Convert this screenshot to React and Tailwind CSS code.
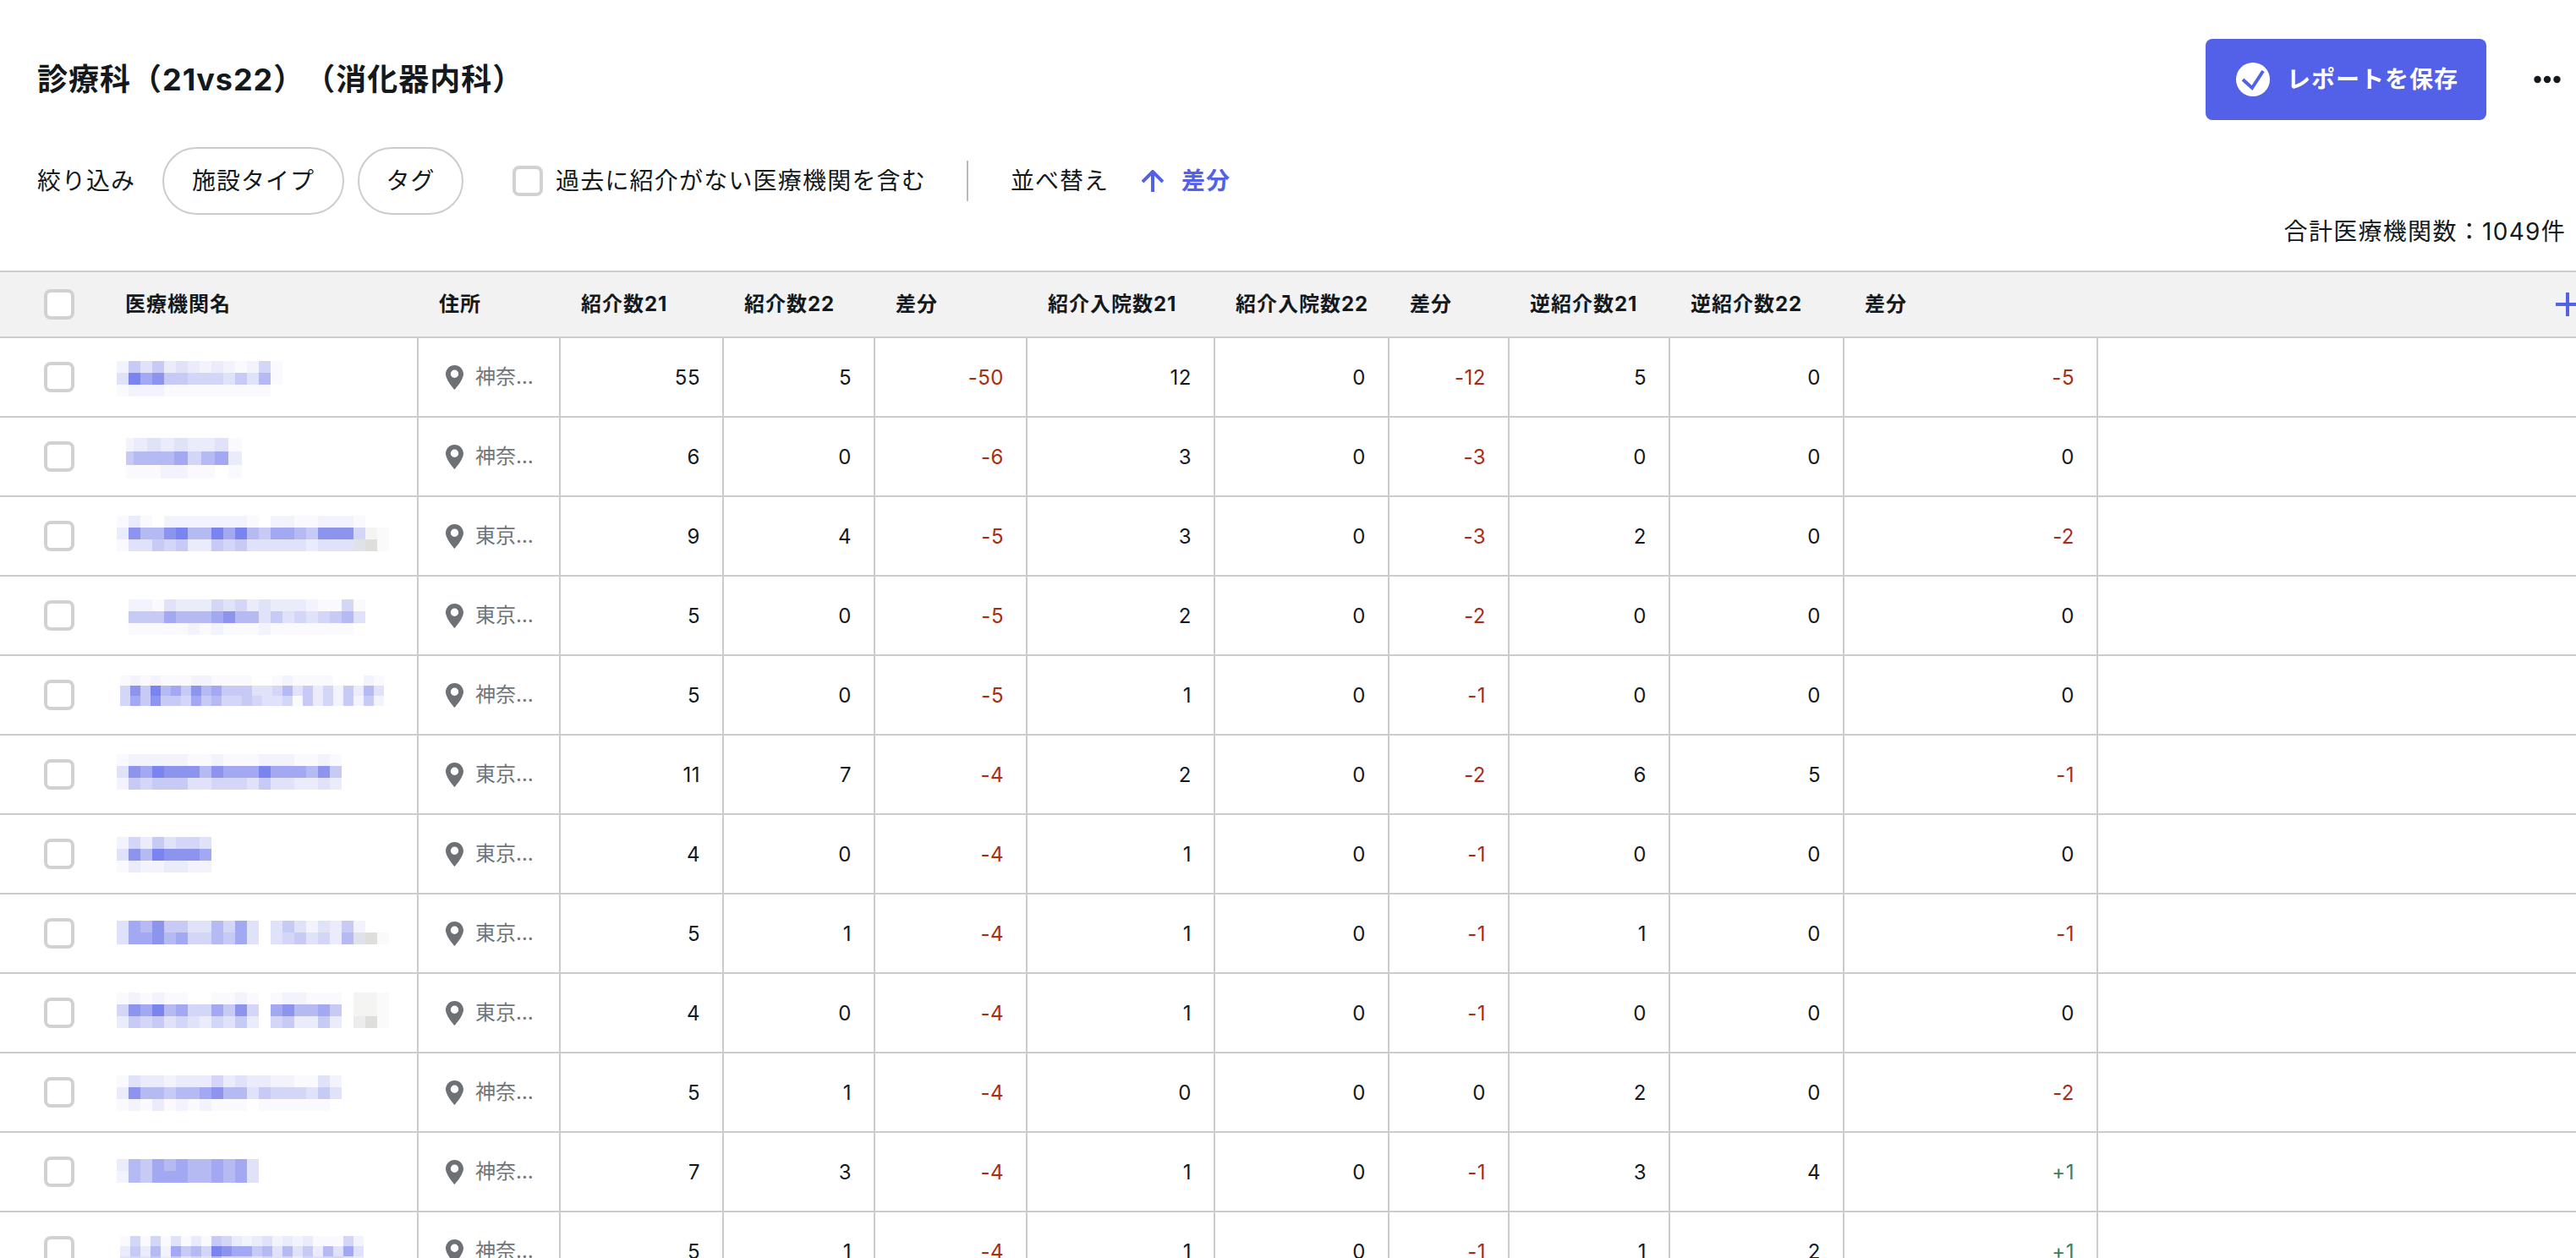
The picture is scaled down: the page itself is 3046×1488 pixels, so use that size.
import React from "react";

const PALETTE = {
  1: "#f9f9fe",
  2: "#f3f3fd",
  3: "#ebecfb",
  4: "#e0e2f9",
  5: "#d4d6f7",
  6: "#c6caf5",
  7: "#b5baf3",
  8: "#a2a8f1",
  9: "#8c94ee",
  a: "#7a84ee",
  g: "#f4f5f2",
  h: "#dedfdd",
  i: "#ececec",
  j: "#fafafa",
  k: "#e0e2ea",
};

// blurred clinic names: x/y are relative to the name cell
const names = [
  { x: 8, y: 27, w: 14, h: 14, rows: ["26463432321251", "4a896655546471", "12221111111110"] },
  { x: 19, y: 24, w: 16, h: 16, first: 9, rows: ["234343341", "677785783", "111221101"] },
  { x: 8, y: 22, w: 14, h: 14, rows: ["13102222222102211222100", "39779a77a8a7688769995gj", "14465633656444443444khj"] },
  { x: 22, y: 27, w: 14, h: 14, rows: ["22143335453433321151", "66687778977464545674", "11111212111211111110"] },
  { x: 12, y: 23, w: 12, h: 12, rows: ["12121112211110012111100021", "596a7869786664457463526374", "58696658675565445163526262"] },
  { x: 8, y: 22, w: 14, h: 14, rows: ["1222221121112221121", "498a99979888a888796", "2656664455546443343"] },
  { x: 8, y: 26, w: 14, h: 14, rows: ["25364554", "497a9998", "13223322"] },
  { x: 8, y: 31, w: 14, h: 14, rows: ["487966447584_4642436200", "488978557684_4564537khj"] },
  { x: 8, y: 22, w: 14, h: 14, rows: ["121211001121_122111_ggj", "598a78558695_897786_ggj", "365645435463_563363_ihj"] },
  { x: 8, y: 26, w: 14, h: 14, rows: ["1433233353433221142", "3977677897746555464", "1213121211101111110"] },
  { x: 8, y: 31, w: 14, h: 14, rows: ["376878778784", "276888778784"] },
  { x: 12, y: 28, w: 12, h: 12, rows: ["151514131653234232311152", "363728675a98867474637484", "454636454755545453545543"] },
];

const rows = [
  ["神奈川県", 55, 5, -50, 12, 0, -12, 5, 0, -5],
  ["神奈川県", 6, 0, -6, 3, 0, -3, 0, 0, 0],
  ["東京都新宿区", 9, 4, -5, 3, 0, -3, 2, 0, -2],
  ["東京都新宿区", 5, 0, -5, 2, 0, -2, 0, 0, 0],
  ["神奈川県", 5, 0, -5, 1, 0, -1, 0, 0, 0],
  ["東京都新宿区", 11, 7, -4, 2, 0, -2, 6, 5, -1],
  ["東京都新宿区", 4, 0, -4, 1, 0, -1, 0, 0, 0],
  ["東京都新宿区", 5, 1, -4, 1, 0, -1, 1, 0, -1],
  ["東京都新宿区", 4, 0, -4, 1, 0, -1, 0, 0, 0],
  ["神奈川県", 5, 1, -4, 0, 0, 0, 2, 0, -2],
  ["神奈川県", 7, 3, -4, 1, 0, -1, 3, 4, 1],
  ["神奈川県", 5, 1, -4, 1, 0, -1, 1, 2, 1],
];

const Checkbox = () => (
  <span className="block h-[36px] w-[36px] shrink-0 rounded-[8px] border-4 border-[#d0d1d1] bg-white" />
);

const Blur = ({ data }) => {
  const { x, y, w, h, first, rows: lines } = data;
  return (
    <svg width="363" height="92" viewBox="0 0 363 92" shapeRendering="crispEdges" className="block">
      {lines.map((line, r) =>
        line.split("").map((c, i) => {
          if (!PALETTE[c]) return null;
          const cx = first ? (i === 0 ? x : x + first + (i - 1) * w) : x + i * w;
          const cw = first && i === 0 ? first : w;
          return <rect key={`${r}-${i}`} x={cx} y={y + r * h} width={cw} height={h} fill={PALETTE[c]} />;
        }),
      )}
    </svg>
  );
};

const Pin = () => (
  <svg width="21" height="29" viewBox="0 0 21 29" className="shrink-0">
    <path
      fillRule="evenodd"
      fill="#6d7175"
      d="M10.5 0C4.7 0 0 4.7 0 10.5 0 17.5 10.5 29 10.5 29S21 17.5 21 10.5C21 4.7 16.3 0 10.5 0Zm0 15a4.7 4.7 0 1 1 0-9.4 4.7 4.7 0 0 1 0 9.4Z"
    />
  </svg>
);

const Num = ({ value }) => (
  <div className="flex items-center justify-end border-r-2 border-[#cccccc] pr-[26px] pt-[2px] tracking-[0.5px] text-[#14191d]">{value}</div>
);

const Diff = ({ value }) => {
  let color = "text-[#14191d]";
  if (value < 0) color = "text-[#a92d12]";
  if (value > 0) color = "text-[#38805a]";
  return (
    <div className={`flex items-center justify-end border-r-2 border-[#cccccc] pr-[26px] pt-[2px] tracking-[0.5px] ${color}`}>
      {value > 0 ? `+${value}` : value}
    </div>
  );
};

const gridCols =
  "grid grid-cols-[495px_168px_193px_179px_180px_222px_206px_142px_190px_206px_300px_1fr]";

const Head = ({ children }) => <div className="flex items-center pl-[24px]">{children}</div>;

export default function App() {
  return (
    <div className="h-screen overflow-hidden bg-white font-[Inter,'Noto_Sans_CJK_JP',sans-serif] text-[#14191d] [text-spacing-trim:space-all]">
      <div className="flex items-center justify-between pl-[44px] pr-[18px] pt-[46px]">
        <h1 className="text-[36px] font-bold leading-[48px] tracking-[1px]">診療科（21vs22）（消化器内科）</h1>
        <div className="flex items-center gap-[56px]">
          <button className="flex h-[96px] w-[332px] items-center gap-[20px] rounded-[8px] bg-[#5360e8] pl-[36px] text-[28px] font-bold tracking-[1px] text-white">
            <svg width="40" height="40" viewBox="0 0 40 40">
              <circle cx="20" cy="20" r="20" fill="#ffffff" />
              <path d="M8 20l11 10L32 10" fill="none" stroke="#5360e8" strokeWidth="4" />
            </svg>
            レポートを保存
          </button>
          <svg width="32" height="10" viewBox="0 0 32 10">
            <circle cx="4.5" cy="5" r="4.2" fill="#14191d" />
            <circle cx="16" cy="5" r="4.2" fill="#14191d" />
            <circle cx="27.5" cy="5" r="4.2" fill="#14191d" />
          </svg>
        </div>
      </div>

      <div className="mt-[32px] flex h-[80px] items-center pl-[44px] text-[28px] tracking-[1px]">
        <span className="mr-[32px]">絞り込み</span>
        <button className="mr-[16px] flex h-[80px] w-[215px] items-center justify-center rounded-[40px] border-2 border-[#cccccc]">
          施設タイプ
        </button>
        <button className="mr-[58px] flex h-[80px] w-[125px] items-center justify-center rounded-[40px] border-2 border-[#cccccc]">
          タグ
        </button>
        <Checkbox />
        <span className="ml-[15px] tracking-[1.2px]">過去に紹介がない医療機関を含む</span>
        <span className="ml-[48px] h-[48px] w-[2px] bg-[#bbbbbb]" />
        <span className="ml-[50px]">並べ替え</span>
        <svg width="26" height="26" viewBox="0 0 26 26" className="ml-[39px]" fill="none" stroke="#5360e8" strokeWidth="4">
          <path d="M13 26V3M1 14L13 2l12 12" />
        </svg>
        <span className="ml-[21px] font-bold text-[#5360e8]">差分</span>
      </div>

      <div className="flex h-[40px] items-center justify-end pr-[12px] text-[28px] tracking-[1.3px]">合計医療機関数：1049件</div>

      <div className="mt-[26px] text-[24px]">
        <div className={`${gridCols} h-[80px] border-y-2 border-[#cccccc] bg-[#f2f2f3] font-bold tracking-[1px]`}>
          <div className="flex items-center pl-[52px]">
            <Checkbox />
            <span className="ml-[60px]">医療機関名</span>
          </div>
          <Head>住所</Head>
          <Head>紹介数21</Head>
          <Head>紹介数22</Head>
          <Head>差分</Head>
          <Head>紹介入院数21</Head>
          <Head>紹介入院数22</Head>
          <Head>差分</Head>
          <Head>逆紹介数21</Head>
          <Head>逆紹介数22</Head>
          <Head>差分</Head>
          <div className="flex items-center justify-end overflow-hidden">
            <svg width="24" height="28" viewBox="0 0 24 28" className="shrink-0" fill="none" stroke="#5360e8" strokeWidth="4">
              <path d="M14 0v28M0 14h24" />
            </svg>
          </div>
        </div>

        {rows.map((row, i) => (
          <div key={i} className={`${gridCols} h-[94px] border-b-2 border-[#cccccc]`}>
            <div className="flex items-center border-r-2 border-[#cccccc] pl-[52px]">
              <Checkbox />
              <div className="ml-[42px]">
                <Blur data={names[i]} />
              </div>
            </div>
            <div className="flex items-center gap-[14px] border-r-2 border-[#cccccc] pl-[32px] text-[#6f7478]">
              <Pin />
              <span className="w-[70px] truncate">{row[0]}</span>
            </div>
            <Num value={row[1]} />
            <Num value={row[2]} />
            <Diff value={row[3]} />
            <Num value={row[4]} />
            <Num value={row[5]} />
            <Diff value={row[6]} />
            <Num value={row[7]} />
            <Num value={row[8]} />
            <Diff value={row[9]} />
            <div />
          </div>
        ))}
      </div>
    </div>
  );
}
